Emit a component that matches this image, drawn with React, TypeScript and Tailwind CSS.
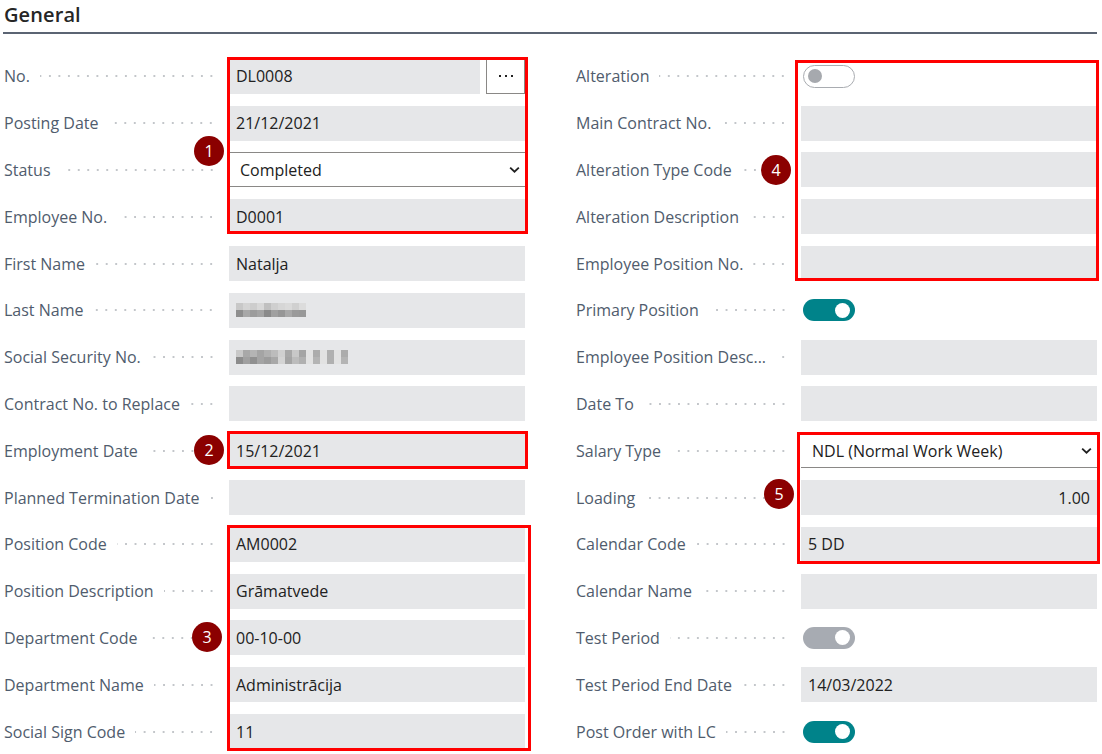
import React from 'react';

/* ------------------------------- types ----------------------------------- */

type Field =
  | { label: string; kind: 'text'; value?: string; align?: 'right' }
  | { label: string; kind: 'lookup'; value: string }
  | { label: string; kind: 'select'; value: string }
  | { label: string; kind: 'toggle'; state: 'off' | 'on' | 'disabled' }
  | { label: string; kind: 'blur'; shades: string[][] };

/* -------------------------------- data ----------------------------------- */

// pixelated (redacted) values, one colour per block
const LAST_NAME_BLUR = [
  ['#c8c8c8', '#d4d4d4', '#cdcdcd', '#d8d8d8', '#c0c0c0', '#cfcfcf', '#d6d6d6', '#dadada', '#d0d0d0', '#dcdcdc'],
  ['#8e8e8e', '#a8a8a8', '#9c9c9c', '#a4a4a4', '#8a8a8a', '#a0a0a0', '#969696', '#a8a8a8', '#9a9a9a', '#989898'],
];

const SSN_BLUR = [
  ['#c8c8c8', '#a8a8a8', '#b4b4b4', '#a4a4a4', '#b0b0b0', '#bcbcbc', '#d0d0d0', '#a8a8a8', '#c8c8c8', '#a4a4a4', '#e2e2e2', '#acacac', '#e2e2e2', '#b0b0b0', '#e2e2e2', '#acacac'],
  ['#8c8c8c', '#a0a0a0', '#909090', '#a4a4a4', '#9c9c9c', '#a8a8a8', '#d4d4d4', '#a4a4a4', '#bcbcbc', '#b0b0b0', '#e2e2e2', '#b4b4b4', '#e2e2e2', '#b0b0b0', '#e2e2e2', '#b4b4b4'],
];

const LEFT: Field[] = [
  { label: 'No.', kind: 'lookup', value: 'DL0008' },
  { label: 'Posting Date', kind: 'text', value: '21/12/2021' },
  { label: 'Status', kind: 'select', value: 'Completed' },
  { label: 'Employee No.', kind: 'text', value: 'D0001' },
  { label: 'First Name', kind: 'text', value: 'Natalja' },
  { label: 'Last Name', kind: 'blur', shades: LAST_NAME_BLUR },
  { label: 'Social Security No.', kind: 'blur', shades: SSN_BLUR },
  { label: 'Contract No. to Replace', kind: 'text' },
  { label: 'Employment Date', kind: 'text', value: '15/12/2021' },
  { label: 'Planned Termination Date', kind: 'text' },
  { label: 'Position Code', kind: 'text', value: 'AM0002' },
  { label: 'Position Description', kind: 'text', value: 'Grāmatvede' },
  { label: 'Department Code', kind: 'text', value: '00-10-00' },
  { label: 'Department Name', kind: 'text', value: 'Administrācija' },
  { label: 'Social Sign Code', kind: 'text', value: '11' },
];

const RIGHT: Field[] = [
  { label: 'Alteration', kind: 'toggle', state: 'off' },
  { label: 'Main Contract No.', kind: 'text' },
  { label: 'Alteration Type Code', kind: 'text' },
  { label: 'Alteration Description', kind: 'text' },
  { label: 'Employee Position No.', kind: 'text' },
  { label: 'Primary Position', kind: 'toggle', state: 'on' },
  { label: 'Employee Position Desc...', kind: 'text' },
  { label: 'Date To', kind: 'text' },
  { label: 'Salary Type', kind: 'select', value: 'NDL (Normal Work Week)' },
  { label: 'Loading', kind: 'text', value: '1.00', align: 'right' },
  { label: 'Calendar Code', kind: 'text', value: '5 DD' },
  { label: 'Calendar Name', kind: 'text' },
  { label: 'Test Period', kind: 'toggle', state: 'disabled' },
  { label: 'Test Period End Date', kind: 'text', value: '14/03/2022' },
  { label: 'Post Order with LC', kind: 'toggle', state: 'on' },
];

// callout overlays (red frames + numbered badges)
const FRAMES = [
  'left-[227px] top-[57px] w-[301px] h-[177px]',
  'left-[227px] top-[431px] w-[301px] h-[38px]',
  'left-[227px] top-[525px] w-[304px] h-[226px]',
  'left-[795px] top-[60px] w-[304px] h-[221px]',
  'left-[797px] top-[432px] w-[303px] h-[132px]',
];

const BADGES = [
  { n: 1, cls: 'left-[194px] top-[136px]' },
  { n: 2, cls: 'left-[194px] top-[435px]' },
  { n: 3, cls: 'left-[192px] top-[622px]' },
  { n: 4, cls: 'left-[761px] top-[155px]' },
  { n: 5, cls: 'left-[764px] top-[479px]' },
];

/* ------------------------------ controls --------------------------------- */

function Chevron() {
  return (
    <svg width="13" height="13" viewBox="0 0 12 12" className="shrink-0">
      <path d="M2 4.2l4 3.8 4-3.8" fill="none" stroke="#212121" strokeWidth="1.7" />
    </svg>
  );
}

function Toggle({ state }: { state: 'off' | 'on' | 'disabled' }) {
  if (state === 'off') {
    return (
      <div className="w-[52px] h-[23px] rounded-full border border-[#a9acb1] bg-white flex items-center px-[4px]">
        <div className="w-[14px] h-[14px] rounded-full bg-[#a6a9ae]" />
      </div>
    );
  }
  const bg = state === 'on' ? 'bg-[#00838a]' : 'bg-[#a7abb2]';
  return (
    <div className={`w-[52px] h-[22px] rounded-full ${bg} flex items-center justify-end px-[5px]`}>
      <div className="w-[15px] h-[15px] rounded-full bg-white" />
    </div>
  );
}

function Control({ f }: { f: Field }) {
  switch (f.kind) {
    case 'lookup':
      return (
        <div className="flex h-[35px] w-[296px]">
          <div className="flex-1 bg-[#e6e7e9] flex items-center px-[7px] text-[#212121]">{f.value}</div>
          <div className="w-[39px] ml-[6px] border border-[#8a8886] bg-white flex items-center justify-center gap-[4px]">
            <span className="w-[2px] h-[2px] bg-[#212121]" />
            <span className="w-[2px] h-[2px] bg-[#212121]" />
            <span className="w-[2px] h-[2px] bg-[#212121]" />
          </div>
        </div>
      );
    case 'select':
      return (
        <div className="flex h-[35px] w-[296px] items-center bg-white border-y border-[#8a8886] pl-[11px] pr-[4px] text-[#212121]">
          <span className="flex-1">{f.value}</span>
          <Chevron />
        </div>
      );
    case 'toggle':
      return (
        <div className="h-[35px] w-[296px] flex items-center pl-[2px]">
          <Toggle state={f.state} />
        </div>
      );
    case 'blur':
      return (
        <div className="h-[35px] w-[296px] bg-[#e6e7e9] flex items-center px-[7px]">
          <div className="flex flex-col">
            {f.shades.map((row, i) => (
              <div key={i} className="flex">
                {row.map((c, j) => (
                  <span key={j} className="w-[7px] h-[7px]" style={{ backgroundColor: c }} />
                ))}
              </div>
            ))}
          </div>
        </div>
      );
    default:
      return (
        <div
          className={`h-[35px] w-[296px] bg-[#e6e7e9] flex items-center px-[7px] text-[#212121] ${
            f.align === 'right' ? 'justify-end' : ''
          }`}
        >
          {f.value}
        </div>
      );
  }
}

function Row({ f }: { f: Field }) {
  return (
    <div className="flex items-center h-[46.8px]">
      <div className="w-[225px] flex items-center pr-[13px] shrink-0">
        <span className="text-[#505c6d] whitespace-nowrap">{f.label}</span>
        <span className="flex-1 ml-[10px] h-[4px] bg-[radial-gradient(circle,#c3c6ca_0.9px,transparent_1.3px)] bg-[length:9.5px_4px] bg-repeat-x bg-right" />
      </div>
      <Control f={f} />
    </div>
  );
}

/* -------------------------------- page ----------------------------------- */

export default function App() {
  return (
    <div
      className="relative w-[1102px] h-[754px] overflow-hidden bg-white text-[16px]"
      style={{ fontFamily: '"Segoe UI", "Open Sans", "Noto Sans", sans-serif' }}
    >
      <div className="pl-[3px] pr-[5px]">
        <div className="h-[34px] border-b-2 border-[#5b6473] flex items-center">
          <h2 className="text-[20px] font-semibold text-[#262626] pl-[1px] pb-[3px] tracking-[0.1px]">General</h2>
        </div>

        <div className="grid grid-cols-[522px_522px] gap-x-[50px] pt-[19px] pl-[1px]">
          <div>
            {LEFT.map((f) => (
              <Row key={f.label} f={f} />
            ))}
          </div>
          <div>
            {RIGHT.map((f) => (
              <Row key={f.label} f={f} />
            ))}
          </div>
        </div>
      </div>

      {FRAMES.map((c, i) => (
        <div key={i} className={`absolute border-[3px] border-[#ff0000] pointer-events-none ${c}`} />
      ))}
      {BADGES.map((b) => (
        <div
          key={b.n}
          className={`absolute w-[30px] h-[30px] rounded-full bg-[#8b0000] text-white text-[16px] flex items-center justify-center ${b.cls}`}
        >
          {b.n}
        </div>
      ))}
    </div>
  );
}
